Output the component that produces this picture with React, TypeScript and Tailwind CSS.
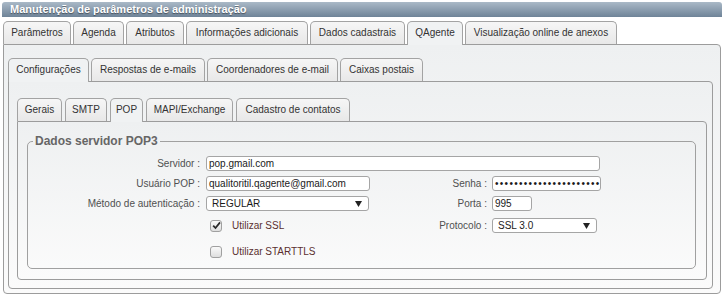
import React from "react"

type Tab = { label: string; w: string; active?: boolean }

const topTabs: Tab[] = [
  { label: "Parâmetros", w: "w-[68px]" },
  { label: "Agenda", w: "w-[51px]" },
  { label: "Atributos", w: "w-[58px]" },
  { label: "Informações adicionais", w: "w-[122px]" },
  { label: "Dados cadastrais", w: "w-[95px]" },
  { label: "QAgente", w: "w-[56px]", active: true },
  { label: "Visualização online de anexos", w: "w-[152px]" },
]

const midTabs: Tab[] = [
  { label: "Configurações", w: "w-[81px]", active: true },
  { label: "Respostas de e-mails", w: "w-[114px]" },
  { label: "Coordenadores de e-mail", w: "w-[131px]" },
  { label: "Caixas postais", w: "w-[83px]" },
]

const innerTabs: Tab[] = [
  { label: "Gerais", w: "w-[45px]" },
  { label: "SMTP", w: "w-[42px]" },
  { label: "POP", w: "w-[33px]", active: true },
  { label: "MAPI/Exchange", w: "w-[87px]" },
  { label: "Cadastro de contatos", w: "w-[114px]" },
]

function TabStrip({ tabs, gap }: { tabs: Tab[]; gap: string }) {
  return (
    <div className={`flex items-end ${gap}`}>
      {tabs.map((t) => (
        <div
          key={t.label}
          className={`${t.w} ${
            t.active
              ? "relative z-10 -mb-px h-[24px] bg-[#f0f2f3]"
              : "h-[23px] bg-gradient-to-b from-[#f6f6f6] to-[#e8e8e8]"
          } shrink-0 whitespace-nowrap rounded-t-[5px] border border-b-0 border-[#a3a3a3] text-center leading-[22px] text-[#333]`}
        >
          {t.label}
        </div>
      ))}
    </div>
  )
}

function Field({ value, w }: { value: string; w: string }) {
  return (
    <div className={`${w} h-[15px] shrink-0 rounded-[3px] border border-[#a5a5a5] bg-white pl-[2px] leading-[13px] text-[#1a1a1a]`}>
      {value}
    </div>
  )
}

function Select({ value, w }: { value: string; w: string }) {
  return (
    <div className={`${w} flex h-[15px] shrink-0 items-center justify-between rounded-[3px] border border-[#a5a5a5] bg-white pl-[5px] pr-[6px] leading-[13px] text-[#1a1a1a]`}>
      <span>{value}</span>
      <svg width="7" height="6" viewBox="0 0 7 6">
        <polygon points="0,0 7,0 3.5,6" fill="#222" />
      </svg>
    </div>
  )
}

function Check({ checked, label }: { checked?: boolean; label: string }) {
  return (
    <div className="flex items-center gap-[10px] pl-[4px]">
      <div className="flex h-[12px] w-[12px] items-center justify-center rounded-[3px] border border-[#a0a0a0] bg-gradient-to-b from-[#fafafa] to-[#dedede]">
        {checked && (
          <svg width="9" height="9" viewBox="0 0 9 9">
            <path d="M1.2 4.6 L3.5 7 L8 1.4" fill="none" stroke="#2a2a2a" strokeWidth="1.8" />
          </svg>
        )}
      </div>
      <span className="text-[10px] text-[#5b3030]">{label}</span>
    </div>
  )
}

export default function App() {
  return (
    <div className="h-[297px] w-[724px] bg-white px-[2px] pt-[2px] font-['Liberation_Sans',Arial,sans-serif] text-[10px]">
      {/* Title bar */}
      <div className="h-[15px] rounded-t-[3px] bg-gradient-to-b from-[#aab9c7] to-[#6f8498] pl-[8px] text-[11px] font-bold leading-[15px] text-white [text-shadow:0_1px_1px_rgba(0,0,0,0.45)]">
        Manutenção de parâmetros de administração
      </div>

      <div className="mx-[1px] mt-[4px]">
        <TabStrip tabs={topTabs} gap="gap-[2px]" />
        <div className="rounded-b-[4px] rounded-tr-[4px] border border-[#9c9c9c] bg-gradient-to-b from-[#eef0f1] to-[#fbfbfb] pb-[4px] pl-[4px] pr-[7px] pt-[13px]">
          <TabStrip tabs={midTabs} gap="gap-[2px]" />
          <div className="rounded-b-[4px] rounded-tr-[4px] border border-[#9c9c9c] bg-gradient-to-b from-[#eef0f1] to-[#fbfbfb] pb-[8px] pl-[8px] pr-[5px] pt-[16px]">
            <TabStrip tabs={innerTabs} gap="gap-[3px]" />
            <div className="rounded-b-[4px] rounded-tr-[4px] border border-[#9c9c9c] bg-gradient-to-b from-[#eef0f1] to-[#fbfbfb] pb-[10px] pl-[9px] pr-[10px] pt-[12px]">
              <fieldset className="rounded-[5px] border border-[#a0a0a0] pb-[9px]">
                <legend className="ml-[5px] px-[2px] text-[12px] font-bold leading-[14px] text-[#666]">
                  Dados servidor POP3
                </legend>
                <div className="flex flex-col pt-[8px] text-[#505050]">
                  <div className="flex items-center">
                    <div className="w-[178px] shrink-0 pr-[6px] text-right">Servidor :</div>
                    <Field value="pop.gmail.com" w="w-[394px]" />
                  </div>
                  <div className="mt-[5px] flex items-center">
                    <div className="w-[178px] shrink-0 pr-[6px] text-right">Usuário POP :</div>
                    <Field value="qualitoritil.qagente@gmail.com" w="w-[164px]" />
                    <div className="w-[122px] shrink-0 pr-[5px] text-right">Senha :</div>
                    <Field value="••••••••••••••••••••••" w="w-[109px] tracking-[1.3px]" />
                  </div>
                  <div className="mt-[5px] flex items-center">
                    <div className="w-[178px] shrink-0 pr-[6px] text-right">Método de autenticação :</div>
                    <Select value="REGULAR" w="w-[163px]" />
                    <div className="ml-[1px] w-[122px] shrink-0 pr-[5px] text-right">Porta :</div>
                    <Field value="995" w="w-[40px]" />
                  </div>
                  <div className="mt-[7px] flex h-[15px] items-center">
                    <div className="w-[178px] shrink-0" />
                    <div className="w-[164px] shrink-0">
                      <Check checked label="Utilizar SSL" />
                    </div>
                    <div className="w-[122px] shrink-0 pr-[5px] text-right">Protocolo :</div>
                    <Select value="SSL 3.0" w="w-[105px]" />
                  </div>
                  <div className="mt-[11px] flex h-[15px] items-center">
                    <div className="w-[178px] shrink-0" />
                    <Check label="Utilizar STARTTLS" />
                  </div>
                </div>
              </fieldset>
            </div>
          </div>
        </div>
      </div>
    </div>
  )
}
